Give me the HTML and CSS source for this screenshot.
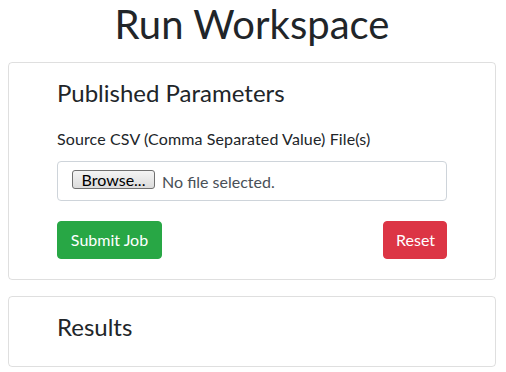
FILE: index.html
```html
<!DOCTYPE html>
<html lang="en">
<head>
<meta charset="utf-8">
<title>Run Workspace</title>
<link rel="stylesheet" href="styles.css">
</head>
<body>
<main class="page">
  <h1 class="title">Run Workspace</h1>
  <section class="card">
    <h4 class="card-title">Published Parameters</h4>
    <label class="field-label">Source CSV (Comma Separated Value) File(s)</label>
    <div class="file-box">
      <span class="browse">Browse...</span>
      <span class="file-status">No file selected.</span>
    </div>
    <div class="actions">
      <button class="btn btn-success" type="button">Submit Job</button>
      <button class="btn btn-danger" type="button">Reset</button>
    </div>
  </section>
  <section class="card card-results">
    <h4 class="card-title">Results</h4>
  </section>
</main>
</body>
</html>
```

FILE: styles.css
```css
* { box-sizing: border-box; }
html, body { margin: 0; padding: 0; background: #fff; }
body {
  font-family: Lato, "Open Sans", sans-serif;
  color: #212529;
  font-size: 16px;
}
.page { padding: 0 10px 0 8px; }
.title {
  margin: 0;
  font-size: 40px;
  line-height: 48px;
  font-weight: 400;
  text-align: center;
}
.card {
  margin-top: 14px;
  border: 1px solid rgba(0,0,0,.125);
  border-radius: 4px;
  padding: 15px 48px 20px;
  display: flex;
  flex-direction: column;
}
.card-results { margin-top: 16px; padding-bottom: 25px; }
.card-title {
  margin: 0;
  font-size: 24px;
  line-height: 29px;
  font-weight: 400;
}
.field-label {
  margin-top: 20px;
  line-height: 24px;
  font-size: 16px;
  letter-spacing: 0.12px;
}
.file-box {
  margin-top: 10px;
  height: 40px;
  border: 1px solid #ced4da;
  border-radius: 4px;
  padding: 6px 14px;
  display: flex;
  align-items: center;
  gap: 7px;
}
.browse {
  height: 19px;
  width: 83px;
  border: 1px solid #707070;
  border-radius: 3px;
  background: linear-gradient(#f4f4f4, #dcdcdc);
  color: #000;
  font-size: 16px;
  line-height: 17px;
  text-align: center;
  margin-bottom: 3px;
}
.file-status { color: #495057; font-size: 16px; }
.actions {
  margin-top: 20px;
  display: flex;
  justify-content: space-between;
}
.btn {
  font-family: inherit;
  font-size: 16px;
  line-height: 24px;
  padding: 6px 12px;
  border: 1px solid transparent;
  border-radius: 4px;
  color: #fff;
}
.btn-success { background: #28a745; border-color: #28a745; width: 105px; }
.btn-danger { background: #dc3545; border-color: #dc3545; width: 64px; }
```
